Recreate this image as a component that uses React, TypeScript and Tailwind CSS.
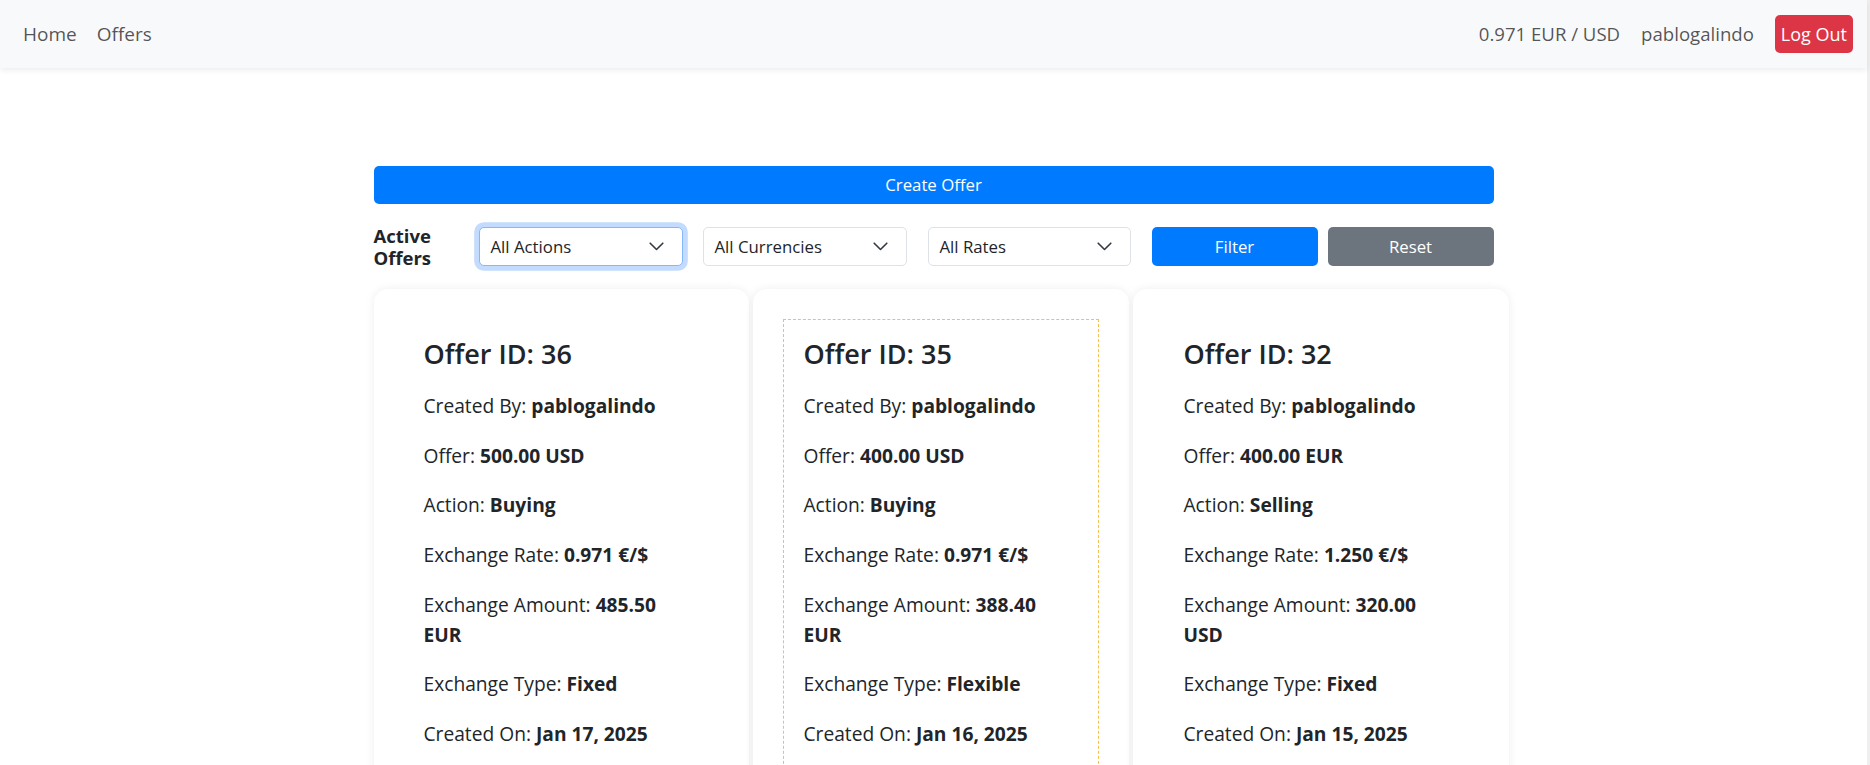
import React from "react";

type Offer = {
  id: number;
  by: string;
  offer: string;
  action: string;
  rate: string;
  amount: string;
  type: string;
  created: string;
  highlight?: boolean;
};

const offers: Offer[] = [
  { id: 36, by: "pablogalindo", offer: "500.00 USD", action: "Buying", rate: "0.971 €/$", amount: "485.50 EUR", type: "Fixed", created: "Jan 17, 2025" },
  { id: 35, by: "pablogalindo", offer: "400.00 USD", action: "Buying", rate: "0.971 €/$", amount: "388.40 EUR", type: "Flexible", created: "Jan 16, 2025", highlight: true },
  { id: 32, by: "pablogalindo", offer: "400.00 EUR", action: "Selling", rate: "1.250 €/$", amount: "320.00 USD", type: "Fixed", created: "Jan 15, 2025" },
];

function Chevron() {
  return (
    <svg width="15" height="9" viewBox="0 0 15 9" fill="none" className="shrink-0">
      <path d="M1.2 1.2 L7.5 7.5 L13.8 1.2" stroke="#343a40" strokeWidth="1.6" strokeLinecap="round" strokeLinejoin="round" />
    </svg>
  );
}

function Select({ label, focused, className }: { label: string; focused?: boolean; className: string }) {
  return (
    <div
      className={`${className} h-[38.4px] flex items-center justify-between pl-[11px] pr-[18px] rounded-[5px] bg-white border text-[16.8px] text-[#212529] ${
        focused ? "border-[#86b7fe] shadow-[0_0_0_4.8px_rgba(13,110,253,0.25)]" : "border-[#dee2e6]"
      }`}
    >
      <span>{label}</span>
      <Chevron />
    </div>
  );
}

function Line({ label, value }: { label: string; value: string }) {
  return (
    <p className="max-w-[262px] text-[19.2px] leading-[30px] mb-[19.7px] text-[#212529]">
      {label}: <b className="font-bold">{value}</b>
    </p>
  );
}

function Card({ o }: { o: Offer }) {
  return (
    <div className="w-[375.6px] shrink-0 rounded-[14px] bg-white shadow-[0_0_10px_rgba(0,0,0,0.07)] p-[30px]">
      <div
        className={`border px-[19px] pt-[17px] pb-[19px] ${
          o.highlight ? "border-dashed border-[#f4c04f]" : "border-transparent"
        }`}
      >
        <h4 className="text-[27px] leading-[34.5px] font-semibold mb-[20px] text-[#212529]">Offer ID: {o.id}</h4>
        <Line label="Created By" value={o.by} />
        <Line label="Offer" value={o.offer} />
        <Line label="Action" value={o.action} />
        <Line label="Exchange Rate" value={o.rate} />
        <Line label="Exchange Amount" value={o.amount} />
        <Line label="Exchange Type" value={o.type} />
        <Line label="Created On" value={o.created} />
      </div>
    </div>
  );
}

export default function App() {
  return (
    <div className="h-[765px] w-[1870px] overflow-hidden flex bg-white font-['Open_Sans',sans-serif]">
      <div className="flex-1 flex flex-col min-w-0">
        <nav className="h-[68px] shrink-0 bg-[#f8f9fa] shadow-[0_2px_6px_rgba(0,0,0,0.08)] flex items-center justify-between pl-[23px] pr-[14px] relative z-10">
          <div className="flex items-center gap-[20px] text-[19px] text-[rgba(0,0,0,0.68)]">
            <span>Home</span>
            <span>Offers</span>
          </div>
          <div className="flex items-center gap-[21px] text-[18.6px] text-[rgba(0,0,0,0.68)]">
            <span>0.971 EUR / USD</span>
            <span>pablogalindo</span>
            <button className="h-[38px] px-[6px] rounded-[5px] bg-[#dc3545] text-white text-[18px]">Log Out</button>
          </div>
        </nav>

        <main className="w-[1120px] mx-auto mt-[98px]">
          <button className="w-full h-[37.5px] rounded-[5px] bg-[#007bff] text-white text-[16.8px]">Create Offer</button>

          <div className="flex items-center mt-[21px]">
            <div className="w-[105px] shrink-0 font-bold text-[18.5px] leading-[22px] text-[#212529]">
              Active
              <br />
              Offers
            </div>
            <Select label="All Actions" focused className="w-[204px]" />
            <Select label="All Currencies" className="w-[204px] ml-[20px]" />
            <Select label="All Rates" className="w-[203px] ml-[21px]" />
            <button className="w-[166px] ml-[21px] h-[38.4px] rounded-[5px] bg-[#007bff] text-white text-[16.8px]">Filter</button>
            <button className="w-[166px] ml-[10px] h-[38.4px] rounded-[5px] bg-[#6c757d] text-white text-[16.8px]">Reset</button>
          </div>

          <div className="flex gap-[4.4px] mt-[20px] w-[1136px]">
            {offers.map((o) => (
              <Card key={o.id} o={o} />
            ))}
          </div>
        </main>
      </div>
      <div className="w-[3px] shrink-0 bg-[#efefef]" />
    </div>
  );
}
